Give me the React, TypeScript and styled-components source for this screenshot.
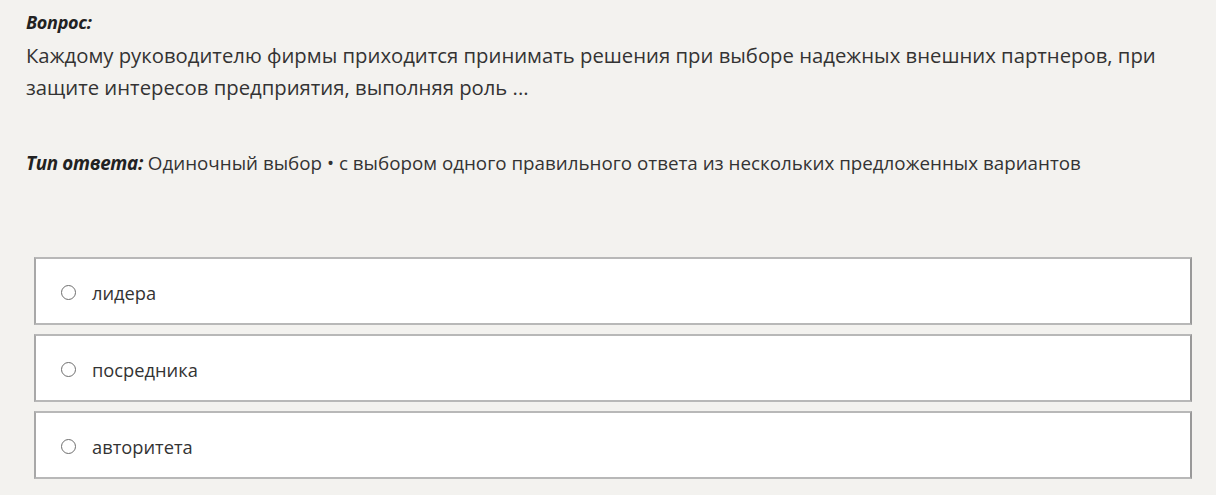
import React from "react";
import styled, { createGlobalStyle } from "styled-components";

const Global = createGlobalStyle`
  html, body { margin: 0; padding: 0; background: #f3f2ef; }
  body { font-family: "Open Sans", "Noto Sans", sans-serif; color: #333; }
`;

const Page = styled.div`
  padding: 9px 26px 0 26px;
  display: flex;
  flex-direction: column;
`;

const Label = styled.div`
  font-size: 18px;
  font-weight: 700;
  font-style: italic;
  color: #222;
  line-height: 26px;
  letter-spacing: -0.3px;
  margin-bottom: 4px;
`;

const Question = styled.div`
  font-size: 20.3px;
  line-height: 32px;
  width: 1150px;
  color: #333;
`;

const TypeLine = styled.div`
  margin-top: 47px;
  font-size: 18.8px;
  line-height: 26px;
  color: #333;
`;

const TypeLabel = styled.span`
  font-weight: 700;
  font-style: italic;
  color: #222;
  letter-spacing: -0.3px;
`;

const Options = styled.div`
  margin-top: 81px;
  margin-left: 8px;
  width: 1158px;
  display: flex;
  flex-direction: column;
  gap: 9px;
`;

const Option = styled.label`
  box-sizing: border-box;
  height: 68px;
  padding-top: 3px;
  background: #fff;
  border: 2px solid #b8b8b8;
  border-left-color: #a8a8a8;
  border-right-color: #999;
  display: flex;
  align-items: center;
  padding-left: 25px;
  gap: 16px;
  font-size: 18.3px;
  color: #333;
`;

const Radio = styled.span`
  box-sizing: border-box;
  width: 15px;
  height: 15px;
  border-radius: 50%;
  border: 1.6px solid #6e6e6e;
  flex: none;
`;

const options = ["лидера", "посредника", "авторитета"];

export default function App() {
  return (
    <>
      <Global />
      <Page>
        <Label>Вопрос:</Label>
        <Question>
          Каждому руководителю фирмы приходится принимать решения при выборе надежных внешних партнеров, при защите интересов предприятия, выполняя роль ...
        </Question>
        <TypeLine>
          <TypeLabel>Тип ответа:</TypeLabel> Одиночный выбор • с выбором одного правильного ответа из нескольких предложенных вариантов
        </TypeLine>
        <Options>
          {options.map((o) => (
            <Option key={o}>
              <Radio />
              {o}
            </Option>
          ))}
        </Options>
      </Page>
    </>
  );
}
